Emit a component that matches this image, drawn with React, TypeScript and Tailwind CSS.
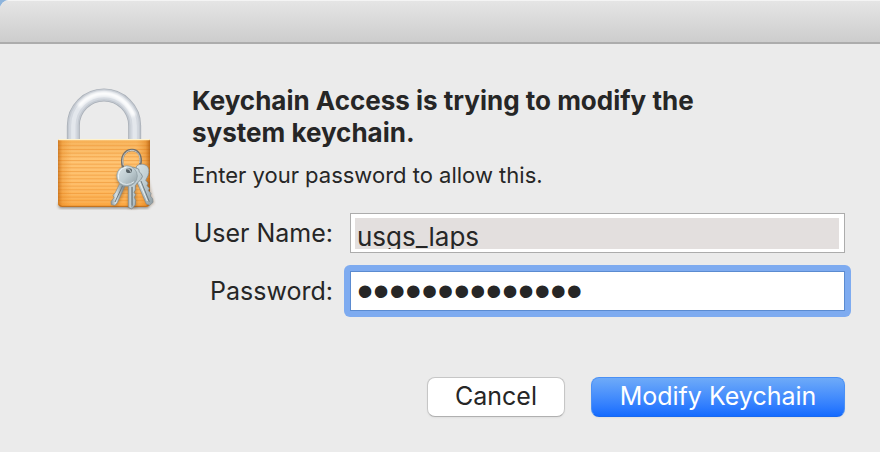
import { useState } from "react";

function KeychainIcon() {
  return (
    <svg viewBox="42 33 306 381" className="h-[127px] w-[102px]" aria-hidden="true">
      <defs>
        <linearGradient id="body" x1="0" y1="0" x2="0" y2="1">
          <stop offset="0" stopColor="#f6b055" />
          <stop offset="0.3" stopColor="#ffc473" />
          <stop offset="0.7" stopColor="#ffbc64" />
          <stop offset="1" stopColor="#fba640" />
        </linearGradient>
        <linearGradient id="side" x1="0" y1="0" x2="1" y2="0">
          <stop offset="0" stopColor="#b65a06" stopOpacity="0.65" />
          <stop offset="0.05" stopColor="#e07d14" stopOpacity="0.3" />
          <stop offset="0.15" stopColor="#e88a20" stopOpacity="0" />
          <stop offset="0.85" stopColor="#e88a20" stopOpacity="0" />
          <stop offset="0.95" stopColor="#d87410" stopOpacity="0.4" />
          <stop offset="1" stopColor="#a95204" stopOpacity="0.75" />
        </linearGradient>
        <linearGradient id="key" x1="0" y1="0" x2="1" y2="1">
          <stop offset="0" stopColor="#dbe5e8" />
          <stop offset="0.5" stopColor="#bfcdd2" />
          <stop offset="1" stopColor="#8e9ca2" />
        </linearGradient>
        <linearGradient id="blade" x1="0" y1="0" x2="1" y2="0">
          <stop offset="0" stopColor="#8b989d" />
          <stop offset="0.35" stopColor="#dae3e5" />
          <stop offset="0.6" stopColor="#a9b5b9" />
          <stop offset="1" stopColor="#727e83" />
        </linearGradient>
        <pattern id="lines" width="10" height="11" y="200" patternUnits="userSpaceOnUse">
          <rect width="10" height="4" fill="#ed9433" opacity="0.6" />
          <rect y="4" width="10" height="2" fill="#ffd28b" opacity="0.6" />
        </pattern>
        <filter id="soft" x="-20%" y="-20%" width="140%" height="140%">
          <feGaussianBlur stdDeviation="4" />
        </filter>
      </defs>

      {/* shackle */}
      <g fill="none">
        <path d="M100 198V152A92 92 0 0 1 284 152V198" stroke="#aab0b8" strokeWidth="39" />
        <path d="M100 198V152A92 92 0 0 1 284 152V198" stroke="#c3c9d1" strokeWidth="34" />
        <path d="M100 198V152A92 92 0 0 1 284 152V198" stroke="#d3d8df" strokeWidth="25" />
        <path d="M100 198V152A92 92 0 0 1 284 152V198" stroke="#e3e7ec" strokeWidth="13" />
        <path d="M119 90Q150 55 192 55Q250 58 280 118" stroke="#ffffff" strokeWidth="13" strokeLinecap="round" filter="url(#soft)" />
      </g>

      {/* body */}
      <rect x="56" y="380" width="272" height="20" rx="8" fill="#403020" opacity="0.55" filter="url(#soft)" />
      <path d="M54 194H330V384Q330 395 319 395H65Q54 395 54 384Z" fill="url(#body)" />
      <path d="M54 203H330V384H54Z" fill="url(#lines)" />
      <path d="M54 194H330V384Q330 395 319 395H65Q54 395 54 384Z" fill="url(#side)" />
      <path d="M55 194H329" stroke="#fff2cb" strokeWidth="4" />
      <path d="M57 388Q59 394 66 394H318Q326 393 328 387" fill="none" stroke="#bd6b18" strokeWidth="3" />

      {/* key shadows */}
      <g fill="#6b3a0c" opacity="0.35" filter="url(#soft)">
        <circle cx="264" cy="310" r="34" />
        <path d="M240 335L216 390L230 394L260 340ZM263 325H290V400H264ZM290 315L328 392L342 385L325 315Z" />
      </g>

      {/* right key */}
      <path
        d="M290 273Q303 262 320 272Q331 282 324 302L317 316L324 324L321 332L328 340L325 347L333 355L331 363L338 371L339 382L329 391L319 387L292 324L282 309Z"
        fill="url(#key)" stroke="#7b888e" strokeWidth="2"
      />
      <path d="M303 318L328 380" stroke="#6d797e" strokeWidth="3" />
      <path d="M298 320L322 378" stroke="#eaf0f1" strokeWidth="3" />
      {/* left key */}
      <path
        d="M239 326L226 353L219 361L222 368L213 380L214 389L225 391L232 383L256 331Z"
        fill="url(#blade)" stroke="#7b888e" strokeWidth="2"
      />
      <path d="M248 332L225 381" stroke="#6d797e" strokeWidth="3" />
      {/* middle key */}
      <path
        d="M278 276L296 282Q296 292 304 297Q312 304 302 314L291 325L286 332V345L282 352L287 359L283 367L287 376L286 390L275 402L265 397V330L257 315Z"
        fill="url(#key)" stroke="#727f85" strokeWidth="2"
      />
      <path d="M270 336H278V393L272 398L266 391V336Z" fill="url(#blade)" />
      <path d="M276 335V390" stroke="#6d797e" strokeWidth="2" />
      {/* front bow */}
      <circle cx="261" cy="303" r="31" fill="url(#key)" stroke="#8a989e" strokeWidth="2" />
      <path d="M236 313Q231 281 260 276" fill="none" stroke="#f2f7f8" strokeWidth="3" />
      <path d="M239 320Q260 337 282 320" fill="none" stroke="#dfe8eb" strokeWidth="3" />
      <ellipse cx="267" cy="287" rx="9" ry="7" fill="#566166" />
      {/* ring */}
      <path d="M249 277C240 244 255 225 276 225C298 225 306 247 301 268" fill="none" stroke="#73706b" strokeWidth="7" />
      <path d="M250 271C243 244 257 226 276 226C295 227 303 245 299 264" fill="none" stroke="#c9cdcc" strokeWidth="3" />
      <path d="M260 281Q269 281 273 292" fill="none" stroke="#a9b3b7" strokeWidth="4" />
    </svg>
  );
}

export default function App() {
  const [userName, setUserName] = useState("usgs_laps");
  const [password, setPassword] = useState("keychainaccess");

  return (
    <div className="bg-[#8db4dc] font-['Inter',sans-serif] text-[#262626]">
      <div className="min-h-screen overflow-hidden rounded-tl-[9px] bg-[#ebebeb]">
        <header className="h-11 border-t border-b-2 border-t-[#f4f4f4] border-b-[#acacac] bg-linear-to-b from-[#e5e5e5] to-[#cdcdcd]" />

        <main className="flex items-start gap-9 pt-[41px] pr-[35px] pb-[34px] pl-[54px]">
          <div className="shrink-0 pt-px">
            <KeychainIcon />
          </div>

          <form className="min-w-0 flex-1" onSubmit={(e) => e.preventDefault()}>
            <h1 className="max-w-[560px] text-[26px] leading-8 font-bold">
              Keychain Access is trying to modify the system keychain.
            </h1>
            <p className="mt-[10px] text-[22px] leading-8">Enter your password to allow this.</p>

            <div className="mt-[22px] grid grid-cols-[141px_1fr] items-center gap-x-[17px] gap-y-[18px] text-[25px]">
              <label htmlFor="user" className="pt-[2px] text-right whitespace-nowrap">User Name:</label>
              <div className="h-10 border border-[#acacac] bg-white pt-1 pr-[5px] pb-[3px] pl-1">
                <input
                  id="user"
                  type="text"
                  value={userName}
                  onChange={(e) => setUserName(e.target.value)}
                  className="block h-[31px] w-full overflow-clip bg-[#e3dfde] px-[2px] pt-[6px] text-[26px] leading-8 outline-none"
                />
              </div>

              <label htmlFor="password" className="pt-[2px] text-right whitespace-nowrap">Password:</label>
              <div className="-m-[6px] rounded-md bg-[#7eabf0] p-[6px]">
                <input
                  id="password"
                  type="password"
                  value={password}
                  onChange={(e) => setPassword(e.target.value)}
                  className="block h-10 w-full border border-[#5b8bd0] bg-white px-[6px] font-['Liberation_Sans',sans-serif] text-[46px] outline-none"
                />
              </div>
            </div>

            <div className="mt-[66px] flex justify-end gap-[26px] text-[25px]">
              <button type="button" className="h-10 w-[138px] rounded-lg border border-[#c6c6c6] border-b-[#b0b0b0] bg-white shadow-xs">
                Cancel
              </button>
              <button type="submit" className="h-10 w-[254px] rounded-lg border border-[#4a90f5] border-b-[#1768f0] bg-linear-to-b from-[#6eaaf8] to-[#146bff] text-white shadow-xs">
                Modify Keychain
              </button>
            </div>
          </form>
        </main>
      </div>
    </div>
  );
}
